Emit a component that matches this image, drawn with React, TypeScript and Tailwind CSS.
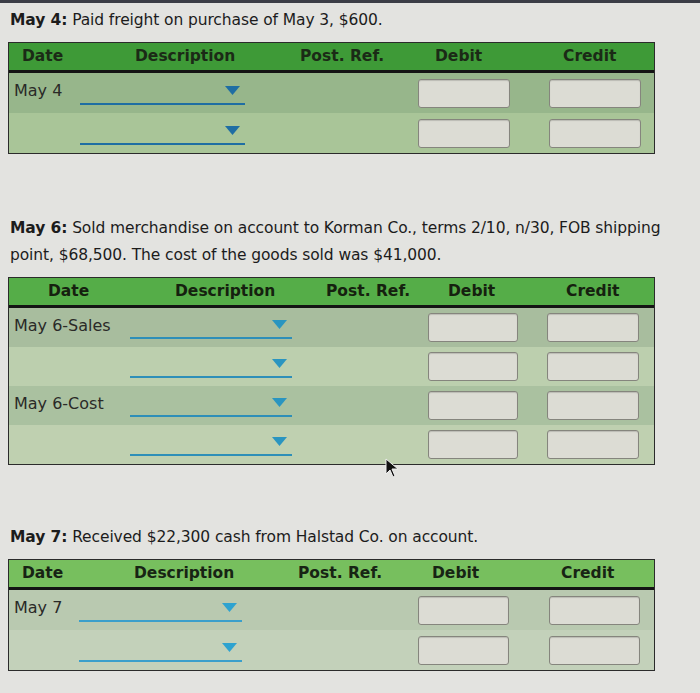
import React from 'react'

type Section = {
  lead: string
  lines: string[]
  gap: string
  head: string
  headCols: string
  rowCols: string
  rowBg: string[]
  dates: string[]
  line: string
  tri: string
  rowH: string
}

const sections: Section[] = [
  {
    lead: 'May 4:',
    lines: ['Paid freight on purchase of May 3, $600.'],
    gap: 'pt-[4px]',
    head: 'bg-[#3e9a37] text-[#1b2a16]',
    headCols: 'grid-cols-[113px_165px_135px_128px_1fr] pl-[13px]',
    rowCols: 'grid-cols-[71px_165px_173px_92px_39px_92px]',
    rowBg: ['bg-[#97b68b]', 'bg-[#a9c598]'],
    dates: ['May 4', ''],
    line: '#1f6ea3',
    tri: '#1f6ea3',
    rowH: 'h-[40px]',
  },
  {
    lead: 'May 6:',
    lines: [
      'Sold merchandise on account to Korman Co., terms 2/10, n/30, FOB shipping',
      'point, $68,500. The cost of the goods sold was $41,000.',
    ],
    gap: 'pt-[61px]',
    head: 'bg-[#55ad48] text-[#15210f]',
    headCols: 'grid-cols-[127px_151px_122px_118px_1fr] pl-[39px]',
    rowCols: 'grid-cols-[121px_162px_136px_90px_29px_92px]',
    rowBg: ['bg-[#a8bd9e]', 'bg-[#bccfae]', 'bg-[#aac1a0]', 'bg-[#bfd0b0]'],
    dates: ['May 6-Sales', '', 'May 6-Cost', ''],
    line: '#2e8fb8',
    tri: '#2a95c0',
    rowH: 'h-[39px]',
  },
  {
    lead: 'May 7:',
    lines: ['Received $22,300 cash from Halstad Co. on account.'],
    gap: 'pt-[59px]',
    head: 'bg-[#77bf5e] text-[#172414]',
    headCols: 'grid-cols-[112px_164px_134px_129px_1fr] pl-[13px]',
    rowCols: 'grid-cols-[70px_163px_176px_91px_40px_91px]',
    rowBg: ['bg-[#b9c9b0]', 'bg-[#c3d1ba]'],
    dates: ['May 7', ''],
    line: '#3a9fcb',
    tri: '#2ea3d0',
    rowH: 'h-[40px]',
  },
]

const heads = ['Date', 'Description', 'Post. Ref.', 'Debit', 'Credit']

function AmountBox() {
  return <div className="h-[29px] rounded-[3px] border border-[#85857d] bg-[#dcdcd4] shadow-[inset_0_1px_1px_rgba(0,0,0,.15)]" />
}

function AccountPicker({ line, tri }: { line: string; tri: string }) {
  return (
    <div className="flex h-full flex-col items-end justify-end pb-[8px]">
      <svg width="15" height="9" viewBox="0 0 15 9" className="mb-[8px] mr-[5px]">
        <path d="M0 0h15L7.5 9z" fill={tri} />
      </svg>
      <div className="h-[2px] w-full" style={{ background: line }} />
    </div>
  )
}

function Journal({ s }: { s: Section }) {
  const [first, ...rest] = s.lines
  return (
    <section className={s.gap}>
      <div className="px-[10px] text-[15.5px] leading-[27px] tracking-[-0.1px] text-[#1c1c1c]">
        <p className="whitespace-nowrap">
          <b>{s.lead}</b> {first}
        </p>
        {rest.map((l) => (
          <p key={l} className="whitespace-nowrap">{l}</p>
        ))}
      </div>
      <div className="mx-[8px] mt-[8px] w-[647px] border border-[#2b2b2b]">
        <div className={`grid h-[30px] items-center border-b-[3px] border-b-[#141414] text-[15.5px] font-bold ${s.head} ${s.headCols}`}>
          {heads.map((h) => (
            <span key={h}>{h}</span>
          ))}
        </div>
        {s.dates.map((d, i) => (
          <div key={i} className={`grid items-center ${s.rowH} ${s.rowBg[i]} ${s.rowCols}`}>
            <span className="-mt-[4px] whitespace-nowrap pl-[5px] text-[16px] text-[#2a2a28]">{d}</span>
            <AccountPicker line={s.line} tri={s.tri} />
            <span />
            <AmountBox />
            <span />
            <AmountBox />
          </div>
        ))}
      </div>
    </section>
  )
}

export default function App() {
  return (
    <div className="relative h-[693px] w-[700px] overflow-hidden bg-[#e3e3e0] font-['DejaVu_Sans',Verdana,sans-serif]">
      <div className="h-[3px] bg-[#3b3d46]" />
      {sections.map((s) => (
        <Journal key={s.lead} s={s} />
      ))}
      {/* mouse pointer resting over the second journal */}
      <svg width="14" height="20" viewBox="0 0 14 20" className="absolute left-[385px] top-[458px]">
        <path d="M1 1v15l4-4 3 7 2-1-3-7h6z" fill="#111" stroke="#eee" strokeWidth="1" />
      </svg>
    </div>
  )
}
